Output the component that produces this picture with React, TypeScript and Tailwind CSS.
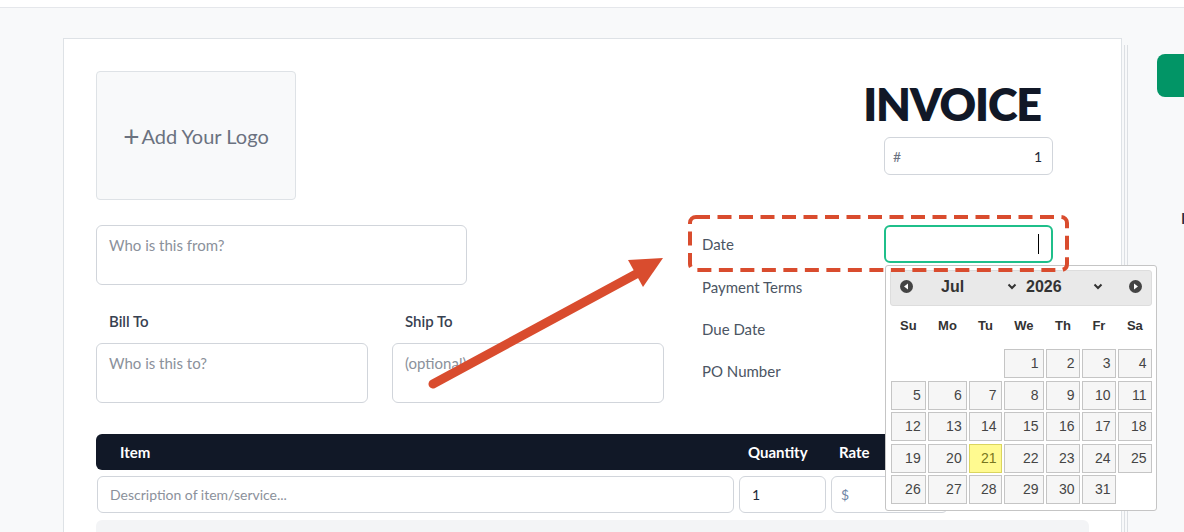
import { ReactNode } from "react";

const weekdays = ["Su", "Mo", "Tu", "We", "Th", "Fr", "Sa"];

// July 2026 starts on a Wednesday
const weeks: (number | null)[][] = [
  [null, null, null, 1, 2, 3, 4],
  [5, 6, 7, 8, 9, 10, 11],
  [12, 13, 14, 15, 16, 17, 18],
  [19, 20, 21, 22, 23, 24, 25],
  [26, 27, 28, 29, 30, 31, null],
];

function Field({ children, className = "" }: { children?: ReactNode; className?: string }) {
  return (
    <div className={`rounded-md border border-[#d1d5db] bg-white ${className}`}>{children}</div>
  );
}

function MetaRow({ label, children, tall }: { label: string; children?: ReactNode; tall?: boolean }) {
  return (
    <div className={`flex items-center justify-between ${tall ? "mb-[3px] h-[38px]" : "h-[42px]"}`}>
      <span className="text-[15px] text-[#4b5563]">{label}</span>
      {children}
    </div>
  );
}

function InvoiceCard() {
  return (
    <div className="h-[520px] w-[1059px] shrink-0 border border-[#dee2e6] bg-white px-8 pt-8">
      <div className="flex">
        <div className="w-[592px] shrink-0">
          <div className="flex h-[129px] w-[200px] items-center justify-center rounded border border-[#dee2e6] bg-[#f8f9fa] text-[20px] text-[#6b7280]">
            <span className="mr-[2px] text-[28px] leading-none">+</span>Add Your Logo
          </div>
          <Field className="mt-[25px] h-[60px] w-[371px] px-3 pt-[7px]">
            <span className="text-[15px] text-[#8b919b]">Who is this from?</span>
          </Field>
          <div className="mt-[26px] flex gap-[24px]">
            <div className="w-[272px]">
              <div className="pl-[13px] text-[15px] font-semibold leading-5 text-[#374151]">Bill To</div>
              <Field className="mt-[12px] h-[60px] px-3 pt-[7px]">
                <span className="text-[15px] text-[#8b919b]">Who is this to?</span>
              </Field>
            </div>
            <div className="w-[272px]">
              <div className="pl-[13px] text-[15px] font-semibold leading-5 text-[#374151]">Ship To</div>
              <Field className="mt-[12px] h-[60px] px-3 pt-[7px]">
                <span className="text-[15px] text-[#8b919b]">(optional)</span>
              </Field>
            </div>
          </div>
        </div>

        <div className="flex-1 pl-[14px] pr-[36px]">
          <h1 className="mr-[12px] mt-[10px] text-right text-[45px] font-extrabold leading-[46px] tracking-tight text-[#111827]">
            INVOICE
          </h1>
          <div className="mt-[10px] flex justify-end">
            <Field className="flex h-[38px] w-[169px] items-center justify-between pl-2 pr-[10px] text-[14px]">
              <span className="text-[#6b7280]">#</span>
              <span className="text-[#1f2937]">1</span>
            </Field>
          </div>
          <div className="mt-[50px]">
            <MetaRow label="Date" tall>
              <div className="flex h-[38px] w-[169px] items-center justify-end rounded-md border-2 border-[#1fbf8a] pr-3">
                <span className="h-[20px] w-px bg-black" />
              </div>
            </MetaRow>
            <MetaRow label="Payment Terms" />
            <MetaRow label="Due Date" />
            <MetaRow label="PO Number" />
          </div>
        </div>
      </div>

      <div className="mt-[31px] flex h-[36px] items-center rounded-md bg-[#111827] text-[15px] font-bold text-white">
        <span className="w-[642px] pl-6">Item</span>
        <span className="w-[92px] pl-[10px]">Quantity</span>
        <span className="w-[122px] pl-[9px]">Rate</span>
      </div>
      <div className="mt-[6px] flex gap-[5px] pl-px">
        <Field className="flex h-[37px] w-[637px] items-center px-3 text-[14px] text-[#8b919b]">
          Description of item/service...
        </Field>
        <Field className="flex h-[37px] w-[87px] items-center px-3 text-[14px] text-[#1f2937]">1</Field>
        <Field className="flex h-[37px] w-[117px] items-center px-[9px] text-[14px] text-[#6f86a6]">$</Field>
      </div>
      <div className="mt-[7px] h-[40px] rounded-md bg-[#f3f4f6]" />
    </div>
  );
}

function Chevron() {
  return (
    <svg width="10" height="7" viewBox="0 0 10 7" className="ml-auto">
      <path d="M1.5 1.5 5 5l3.5-3.5" fill="none" stroke="#333" strokeWidth="2" />
    </svg>
  );
}

function NavButton({ dir }: { dir: "prev" | "next" }) {
  return (
    <svg width="13" height="13" viewBox="0 0 13 13">
      <circle cx="6.5" cy="6.5" r="6.5" fill="#444" />
      {dir === "prev" ? (
        <path d="M8 3.5v6L4 6.5z" fill="#fff" />
      ) : (
        <path d="M5 3.5v6l4-3z" fill="#fff" />
      )}
    </svg>
  );
}

function DatePicker() {
  return (
    <div className="absolute left-[885px] top-[265px] h-[246px] w-[272px] rounded-[3px] border border-[#c5c5c5] bg-white p-[4px] font-['Liberation_Sans',Arial,sans-serif] text-[#454545]">
      <div className="flex h-[36px] items-center rounded-[3px] border border-[#dddddd] bg-[#e9e9e9] px-[9px] pb-[3px] text-[16px] font-bold text-[#333]">
        <NavButton dir="prev" />
        <div className="ml-[28px] flex w-[76px] items-center">
          <span>Jul</span>
          <Chevron />
        </div>
        <div className="ml-[9px] flex w-[77px] items-center">
          <span>2026</span>
          <Chevron />
        </div>
        <div className="ml-auto">
          <NavButton dir="next" />
        </div>
      </div>
      <div className="mx-px grid grid-cols-[34.7px_38.4px_32.4px_39.4px_33.4px_33.4px_33.4px] gap-x-[2.6px]">
        {weekdays.map((d) => (
          <div key={d} className="flex h-[43px] items-center justify-center pb-[4px] text-[13px] font-bold text-[#333]">
            {d}
          </div>
        ))}
      </div>
      <div className="mx-px grid grid-cols-[34.7px_38.4px_32.4px_39.4px_33.4px_33.4px_33.4px] gap-x-[2.6px] gap-y-[2.5px]">
        {weeks.flat().map((day, i) =>
          day === null ? (
            <div key={i} />
          ) : (
            <div
              key={i}
              className={`flex h-[29px] items-center justify-end border pr-[4px] text-[14px] ${
                day === 21
                  ? "border-[#dad55e] bg-[#fffa90] text-[#777620]"
                  : "border-[#c5c5c5] bg-[#f6f6f6] text-[#454545]"
              }`}
            >
              {day}
            </div>
          )
        )}
      </div>
    </div>
  );
}

// red callout drawn over the form: dashed frame around the date row plus an arrow
function Callout() {
  return (
    <svg className="pointer-events-none absolute left-0 top-0" width="1184" height="532">
      <rect
        x="690"
        y="217"
        width="377"
        height="53"
        rx="6"
        fill="none"
        stroke="#d94c2e"
        strokeWidth="4"
        strokeDasharray="14 7.5"
      />
      <line x1="433" y1="384" x2="638" y2="273" stroke="#d94c2e" strokeWidth="9" strokeLinecap="round" />
      <polygon points="663,258 628,260 643,287" fill="#d94c2e" />
    </svg>
  );
}

export default function App() {
  return (
    <div className="relative h-[532px] w-[1184px] overflow-hidden bg-[#f8f9fa] font-['Lato','Noto_Sans',sans-serif]">
      <div className="h-2 border-b border-[#e5e7eb] bg-white" />
      <div className="flex pl-[63px] pt-[30px]">
        <InvoiceCard />
        <div className="ml-[2px] mt-[7px] h-[500px] w-[4px] shrink-0 border-x border-[#dcdfe3]" />
        <aside className="ml-[29px] shrink-0 pt-[16px]">
          <div className="h-[43px] w-[200px] rounded-lg bg-[#029566]" />
          <div className="ml-[24px] mt-[110px] text-[15px] font-semibold text-[#1f2937]">I</div>
        </aside>
      </div>
      <DatePicker />
      <Callout />
    </div>
  );
}
